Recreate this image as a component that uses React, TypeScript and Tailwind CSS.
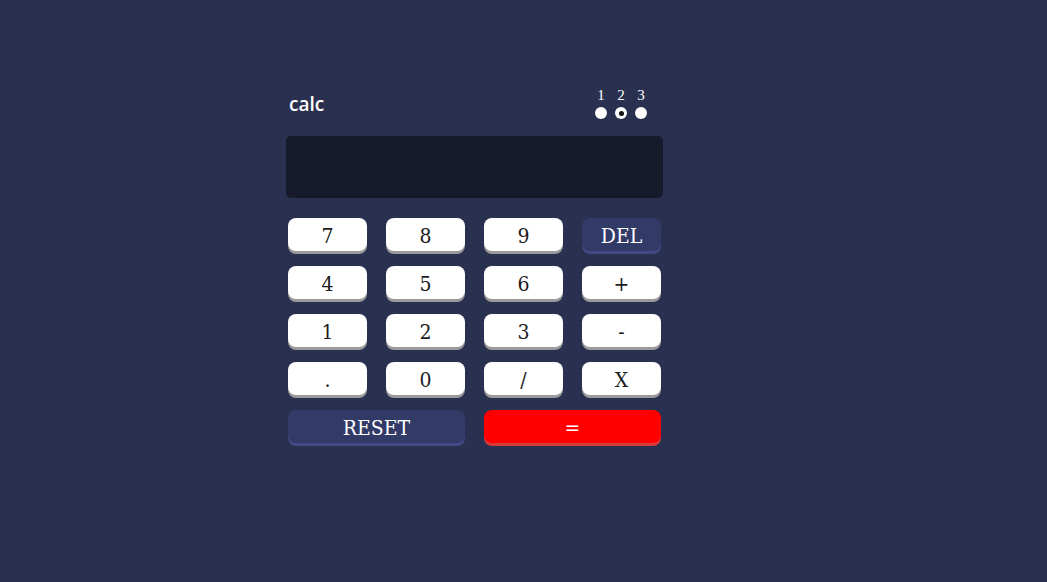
import React from 'react';

const rows = [
  ['7', '8', '9', 'DEL'],
  ['4', '5', '6', '+'],
  ['1', '2', '3', '-'],
  ['.', '0', '/', 'X'],
];

const keyFont = { fontFamily: '"DejaVu Serif Condensed", "DejaVu Serif", serif' };

function Key({ label }: { label: string }) {
  const isDel = label === 'DEL';
  return (
    <button
      type="button"
      className={`h-[33px] pt-[3px] rounded-[8px] text-[21px] leading-none flex items-center justify-center ${
        isDel
          ? 'bg-[#323a68] text-white shadow-[0_3px_0_#414a85]'
          : 'bg-white text-[#1c1c1c] shadow-[0_3px_0_#9a9a9a]'
      }`}
      style={keyFont}
    >
      {label}
    </button>
  );
}

export default function App() {
  return (
    <div className="min-h-[582px] w-full bg-[#2a3150] pt-[88px]">
      <div className="ml-[286px] w-[377px]">
        <div className="flex items-end justify-between px-[3px]">
          <div
            className="text-white text-[19px] font-semibold pb-[1px]"
            style={{ fontFamily: '"Open Sans", sans-serif' }}
          >
            calc
          </div>
          <div className="flex gap-[8px] pr-[13px]">
            {[1, 2, 3].map((n) => (
              <div key={n} className="flex flex-col items-center">
                <span
                  className="text-white text-[15px] leading-[15px]"
                  style={{ fontFamily: '"Liberation Serif", serif' }}
                >
                  {n}
                </span>
                <span className="mt-[4px] w-[12px] h-[12px] rounded-full bg-white flex items-center justify-center">
                  {n === 2 && <span className="w-[5px] h-[5px] rounded-full bg-[#111]" />}
                </span>
              </div>
            ))}
          </div>
        </div>

        <div className="mt-[17px] h-[62px] rounded-[5px] bg-[#161a2b]" />

        <div className="mt-[20px] px-[2px] flex flex-col gap-[15px]">
          {rows.map((row, i) => (
            <div key={i} className="grid grid-cols-4 gap-x-[19px]">
              {row.map((k) => (
                <Key key={k} label={k} />
              ))}
            </div>
          ))}
          <div className="grid grid-cols-2 gap-x-[19px]">
            <button
              type="button"
              className="h-[33px] pt-[3px] rounded-[8px] bg-[#323a68] text-white text-[21px] leading-none shadow-[0_3px_0_#414a85]"
              style={keyFont}
            >
              RESET
            </button>
            <button
              type="button"
              className="h-[33px] pt-[3px] rounded-[8px] bg-[#ff0000] text-white text-[21px] leading-none shadow-[0_3px_0_#d83a3a]"
              style={keyFont}
            >
              =
            </button>
          </div>
        </div>
      </div>
    </div>
  );
}
